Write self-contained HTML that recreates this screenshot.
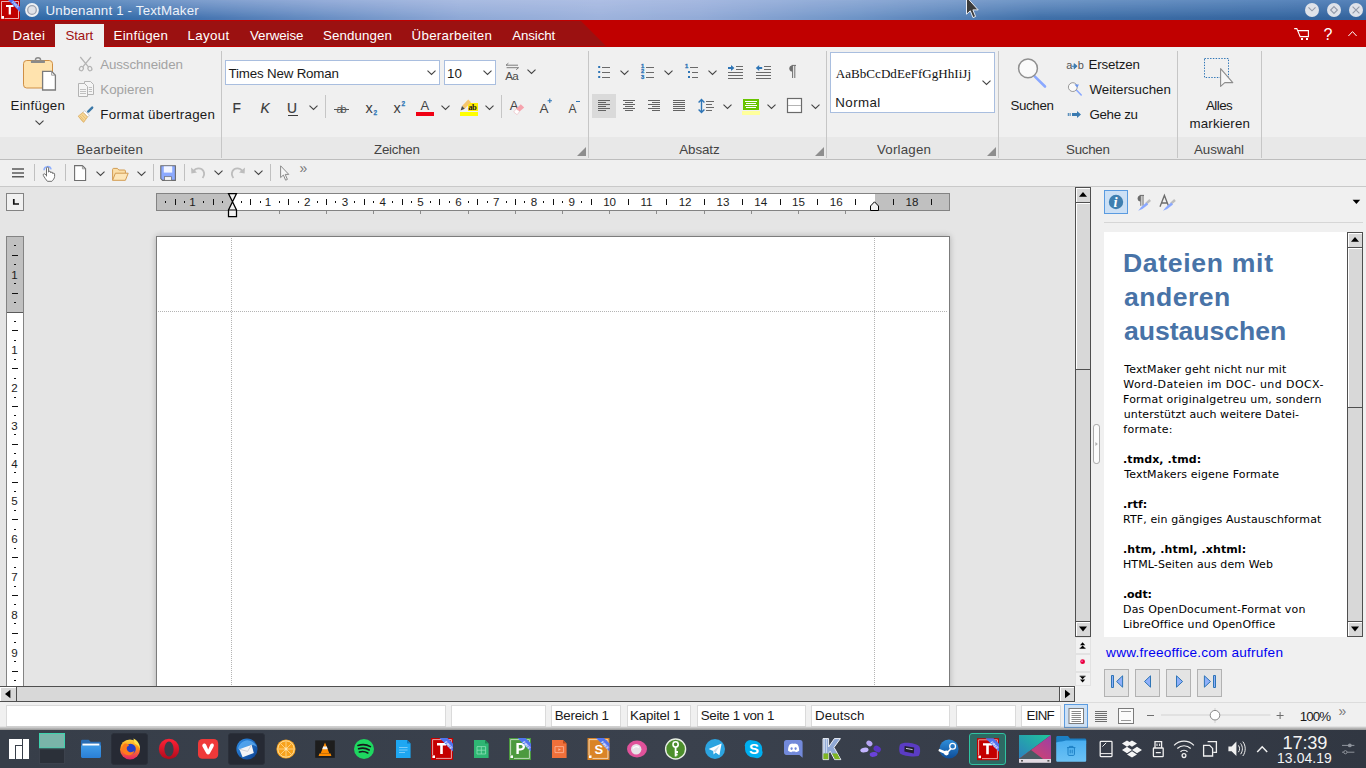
<!DOCTYPE html>
<html lang="de">
<head>
<meta charset="utf-8">
<title>Unbenannt 1 - TextMaker</title>
<style>
*{box-sizing:border-box;margin:0;padding:0}
html,body{width:1366px;height:768px;overflow:hidden;background:#e6e6e6}
body{position:relative;font-family:"Liberation Sans","DejaVu Sans",sans-serif;font-size:13.33px;color:#1e1e1e}
div,span,svg,i,b{position:absolute;display:block}
.sec{left:0;top:0;width:1366px;height:768px}
.t{white-space:nowrap;line-height:1;color:#1a1a1a}
i,b{font-style:normal;font-weight:normal}
svg{overflow:visible}
/* generic helpers */
.vsep{width:1px;background:#c6c6c6;top:51px;height:107px}
.ssep{width:1px;background:#c6c6c6;top:95px;height:23px}
.tsep{width:1px;background:#c0c0c0;top:164px;height:17px}
.chev{width:9px;height:5px}
.fld{background:#fff;border:1px solid #dadada;top:705px;height:22px}
#tbar{left:0;top:0;width:1366px;height:20px;background:linear-gradient(90deg,#2e69a7 0,#316ba8 100px,#4574b0 200px,#6a8fc4 330px,#8ea8d6 460px,#9db2dc 600px,#93abd7 700px,#6d93c6 860px,#3f6fa8 1040px,#34649e 1300px,#33639d 1366px)}
#tbar:after{content:"";position:absolute;left:0;top:0;width:1366px;height:20px;background:linear-gradient(90deg,#5a88bc 0,#6590c2 100px,#7f9fce 200px,#97aed9 330px,#a9bbe1 460px,#adbee3 600px,#a5b8e0 700px,#8eaad5 860px,#7096c6 1040px,#5a86bb 1300px,#5683b9 1366px);-webkit-mask-image:linear-gradient(180deg,#000 0,rgba(0,0,0,.55) 45%,rgba(0,0,0,0) 92%);mask-image:linear-gradient(180deg,#000 0,rgba(0,0,0,.55) 45%,rgba(0,0,0,0) 92%)}
#mbar{left:0;top:20px;width:1366px;height:27px;background:#c00000}
#mdark{left:0;top:21px;width:607px;height:25px;background:#9b1111;clip-path:polygon(0 0,581px 0,606px 25px,0 25px)}
#mtab{left:55px;top:24px;width:49px;height:23px;background:#f0f0f0}
.wb{width:14px;height:14px;top:3px;border-radius:7px;background:#d5dbe6}
#rbg{left:0;top:47px;width:1366px;height:113px;background:#f0f0f0}
#rband{left:0;top:137px;width:1366px;height:22px;background:#e8e8e8}
#rline{left:0;top:159px;width:1366px;height:1px;background:#bdbdbd}
.gl{color:#444}
.cb{background:#fff;border:1px solid #a9bedf}
.dis{color:#a3a3a3}
.corner{width:9px;height:9px;top:147px}
#tbg{left:0;top:160px;width:1366px;height:27px;background:#f0f0f0}
#tline{left:0;top:186px;width:1366px;height:1px;background:#c9c9c9}
#wbg{left:0;top:187px;width:1075px;height:499px;background:#e5e5e5}
#sbg{left:1091px;top:187px;width:275px;height:515px;background:#f0f0f0}
.rn{font-size:11.6px;color:#1c1c1c;line-height:1;white-space:nowrap;text-align:center;width:20px}
#hr{left:156px;top:193px;width:794px;height:18px;background:#fff;border:1px solid #838383}
#vr{left:6px;top:236px;width:18px;height:451px;background:#fff;border:1px solid #838383;border-bottom:none}
.g{background:#c0c0c0}
#page{left:156px;top:236px;width:794px;height:460px;background:#fff;border:1px solid #7c7c7c;border-bottom:none;box-shadow:0 0 6px rgba(0,0,0,.24)}
.sb{background:#d8d8d8;border:1px solid #4f4f4f}
.hl{box-shadow:inset 1px 1px 0 #fff}
.mb{left:1075px;width:16px;background:#f2f2f2;border:1px solid #e2e2e2}
#spanel{left:1104px;top:232px;width:243px;height:405px;background:#fff}
.nb{top:669px;width:25px;height:28px;background:#e4e4e4;border:1px solid #b2b2b2}
.bt{color:#000}
#stbg{left:0;top:702px;width:1366px;height:28px;background:#f0f0f0}
#stsh{left:0;top:726px;width:1366px;height:4px;background:linear-gradient(180deg,rgba(120,120,120,0),rgba(120,120,120,.35) 40%,rgba(90,90,90,.6))}
#tkbg{left:0;top:730px;width:1366px;height:38px;background:linear-gradient(90deg,#373e49 0,#3a414d 50%,#363c48 78%,#313742 100%)}
.tkh{top:733px;height:32px;border-radius:3px;background:#262a34;border:1px solid #2b303a}
</style>
</head>
<body>
<div class="sec" id="titlemenu">
<div id="tbar"></div>
<!-- app icon -->
<svg style="left:0;top:0" width="20" height="20" viewBox="0 0 20 20"><rect width="20" height="20" fill="#c00000"/><path d="M1.5 1.5H18.5V18.5H4.5" fill="none" stroke="#fff" stroke-opacity=".85" stroke-width=".8"/><path d="M1.5 1.5V16" fill="none" stroke="#fff" stroke-opacity=".85" stroke-width=".8"/><rect x="1.2" y="16" width="2.8" height="2.8" fill="#fff"/><path d="M6 5H13.6V7.1H10.9V14.5H8.7V7.1H6Z" fill="#fff"/><path d="M8 0L13.2 0L20 6.8V12Z" fill="#4f6ff2"/><text x="11.6" y="2.6" font-family="Liberation Sans,sans-serif" font-size="3.2" font-weight="700" fill="#dfe6ff" transform="rotate(45 11.6 2.6)">FREE</text></svg>
<!-- keep-above circle -->
<svg style="left:24px;top:2px" width="16" height="16" viewBox="0 0 16 16"><circle cx="8" cy="8" r="6.9" fill="#eef0f3"/><circle cx="8" cy="8" r="4.3" fill="#dfe2e8" stroke="#9da3b0" stroke-width="1.3"/></svg>
<span class="t" style="left:45.50px;top:4.00px;font-size:13.33px;letter-spacing:0.172px;color:#eef2f9;">Unbenannt 1 - TextMaker</span>
<!-- mouse cursor -->
<svg style="left:965px;top:0" width="16" height="21" viewBox="0 0 16 21"><path d="M1.5 -3V14.2L5.3 10.8L8 17.6L10.6 16.5L7.9 9.9H13.2Z" fill="#3c3c3c" stroke="#e8ecf4" stroke-width="1"/></svg>
<!-- window buttons -->
<svg style="left:1304px;top:2px" width="60" height="16" viewBox="1304 2 60 16"><circle cx="1312" cy="10" r="7" fill="#dfe2e9"/><circle cx="1334" cy="10" r="7" fill="#dfe2e9"/><circle cx="1356" cy="10" r="7" fill="#dfe2e9"/><g fill="none" stroke="#9299a8" stroke-width="1.1"><path d="M1308.5 7.4L1312 10.8L1315.5 7.4"/><path d="M1334 6.6L1337.4 10L1334 13.4L1330.6 10Z"/><path d="M1352.6 6.6L1359.4 13.4M1359.4 6.6L1352.6 13.4"/></g></svg>
<!-- menu bar -->
<div id="mbar"></div><div id="mdark"></div><div id="mtab"></div>
<span class="t" style="left:12.50px;top:29.00px;font-size:13.33px;letter-spacing:0.337px;color:#fff;">Datei</span>
<span class="t" style="left:65.50px;top:29.00px;font-size:13.33px;letter-spacing:-0.111px;color:#a01010;">Start</span>
<span class="t" style="left:113.50px;top:29.00px;font-size:13.33px;letter-spacing:0.257px;color:#fff;">Einfügen</span>
<span class="t" style="left:187.50px;top:29.00px;font-size:13.33px;letter-spacing:0.337px;color:#fff;">Layout</span>
<span class="t" style="left:250.00px;top:29.00px;font-size:13.33px;letter-spacing:-0.095px;color:#fff;">Verweise</span>
<span class="t" style="left:323.00px;top:29.00px;font-size:13.33px;letter-spacing:0.090px;color:#fff;">Sendungen</span>
<span class="t" style="left:411.50px;top:29.00px;font-size:13.33px;letter-spacing:0.305px;color:#fff;">Überarbeiten</span>
<span class="t" style="left:512.25px;top:29.00px;font-size:13.33px;letter-spacing:-0.126px;color:#fff;">Ansicht</span>
<!-- cart, help, collapse -->
<svg style="left:1293px;top:27px" width="18" height="14" viewBox="1293 27 18 14"><path d="M1294.2 28.6H1296.8L1300.2 36.6H1308.4V30.6H1298" fill="none" stroke="#fff" stroke-width="1.1"/><path d="M1301 38H1303V40H1301ZM1306 38H1308V40H1306Z" fill="#fff"/></svg>
<span class="t" style="left:1323.60px;top:27.00px;font-size:16px;color:#fff;">?</span>
<svg style="left:1347px;top:30px" width="11" height="7" viewBox="1347 30 11 7" fill="none" stroke="#fff" stroke-width="1"><path d="M1348.4 36L1352.5 31.6L1356.6 36"/></svg>
</div>
<div class="sec" id="ribbon">
<div id="rbg"></div><div id="rband"></div><div id="rline"></div>
<div class="vsep" style="left:221px"></div><div class="vsep" style="left:588px"></div><div class="vsep" style="left:826px"></div><div class="vsep" style="left:998px"></div><div class="vsep" style="left:1177px"></div><div class="vsep" style="left:1261px"></div>
<div class="ssep" style="left:325px"></div><div class="ssep" style="left:501px"></div>

<!-- ===== Bearbeiten ===== -->
<svg style="left:20px;top:54px" width="40" height="40" viewBox="20 54 40 40"><rect x="23.5" y="60.5" width="29" height="27.5" rx="3.2" fill="#ffe3ae" stroke="#cf8f45"/><path d="M35.4 60.3A2.6 2.6 0 0 1 40.6 60.3" fill="none" stroke="#8a8a8a" stroke-width="1.4"/><rect x="30.8" y="60.2" width="14.2" height="2.9" rx="1.2" fill="#8a8a8a"/><path d="M42.6 71.4H51.6L55.4 75.2V90H42.6Z" fill="#fff" stroke="#7b7b7b" stroke-width="1.3"/><path d="M51.6 71.4V75.2H55.4" fill="none" stroke="#9a9a9a" stroke-width=".9"/></svg>
<span class="t" style="left:10.50px;top:99.00px;font-size:13.33px;letter-spacing:0.257px;">Einfügen</span>
<svg class="chev" style="left:35px;top:120.5px" viewBox="0 0 9 5" fill="none" stroke="#444" stroke-width="1.1"><path d="M.5 -.4L4.5 3.4L8.5 -.4"/></svg>
<!-- scissors -->
<svg style="left:78px;top:56px" width="16" height="16" viewBox="78 56 16 16" fill="none" stroke="#b3b3b3" stroke-width="1.2"><path d="M80.3 57L88.6 67.2M91 57L82.6 67.2"/><ellipse cx="81.4" cy="68.6" rx="1.9" ry="2.2" transform="rotate(28 81.4 68.6)"/><ellipse cx="89.9" cy="68.6" rx="1.9" ry="2.2" transform="rotate(-28 89.9 68.6)"/></svg>
<span class="t" style="left:100.20px;top:58.00px;font-size:13.33px;letter-spacing:-0.093px;color:#a3a3a3;">Ausschneiden</span>
<!-- copy -->
<svg style="left:77px;top:80px" width="18" height="18" viewBox="77 80 18 18" fill="#f5f5f5" stroke="#b3b3b3" stroke-width="1"><path d="M84.5 81.5H90.5L93.5 84.5V94.5H84.5Z"/><path d="M78.5 83.5H84.5L87.5 86.5V96.5H78.5Z"/><path d="M80 89.5H86M80 91.5H86M80 93.5H86M88.8 87.5H92M88.8 89.5H92M88.8 91.5H92" stroke-width=".8"/></svg>
<span class="t" style="left:100.30px;top:83.00px;font-size:13.33px;color:#a3a3a3;">Kopieren</span>
<!-- format painter -->
<svg style="left:77px;top:106px" width="18" height="18" viewBox="77 106 18 18"><path d="M92.2 107.6L88.2 111.6" stroke="#3b78a8" stroke-width="2.4" stroke-linecap="round"/><path d="M84.6 110.6L89.4 115.2L87.6 117L83 112.3Z" fill="#fff" stroke="#b9b9b9" stroke-width=".7"/><path d="M83 112.4L87.5 117L83.6 122.4L78.2 116.2Z" fill="#f7d796" stroke="#d9a553" stroke-width=".7"/><path d="M80 115.8L84.2 120.6M81.8 114.6L85.8 119M79.4 117.4L83 121.6" stroke="#dcae62" stroke-width=".6"/></svg>
<span class="t" style="left:100.30px;top:108.00px;font-size:13.33px;letter-spacing:0.265px;">Format übertragen</span>
<span class="t" style="left:76.50px;top:143.00px;font-size:13.33px;letter-spacing:0.216px;color:#444;">Bearbeiten</span>

<!-- ===== Zeichen ===== -->
<div class="cb" style="left:225px;top:60px;width:215px;height:25px"></div>
<span class="t" style="left:228.50px;top:67.00px;font-size:13.33px;letter-spacing:-0.172px;">Times New Roman</span>
<svg class="chev" style="left:427px;top:70.5px" viewBox="0 0 9 5" fill="none" stroke="#444" stroke-width="1.1"><path d="M.5 -.4L4.5 3.4L8.5 -.4"/></svg>
<div class="cb" style="left:444px;top:60px;width:52px;height:25px"></div>
<span class="t" style="left:447.00px;top:67.00px;font-size:13.33px;letter-spacing:0.088px;">10</span>
<svg class="chev" style="left:483px;top:70.5px" viewBox="0 0 9 5" fill="none" stroke="#444" stroke-width="1.1"><path d="M.5 -.4L4.5 3.4L8.5 -.4"/></svg>
<!-- change case -->
<svg style="left:505px;top:62px" width="15" height="8" viewBox="505 62 15 8" fill="none" stroke="#707070" stroke-width=".9"><path d="M506 65.2H518M506 65.2L508.4 63.2M506.6 67.7H518.6M518.6 67.7L516.2 69.7"/></svg>
<span class="t" style="left:505.30px;top:70.00px;font-size:11.6px;letter-spacing:-0.733px;color:#4a4a4a;">Aa</span>
<svg class="chev" style="left:527px;top:69.5px" viewBox="0 0 9 5" fill="none" stroke="#444" stroke-width="1.1"><path d="M.5 -.4L4.5 3.4L8.5 -.4"/></svg>
<span class="t" style="left:232.50px;top:102.00px;font-size:13.8px;color:#3a3a3a;-webkit-text-stroke:.18px #3a3a3a;">F</span>
<span class="t" style="left:260.50px;top:102.00px;font-size:13.8px;font-style:italic;color:#3a3a3a;-webkit-text-stroke:.18px #3a3a3a;">K</span>
<span class="t" style="left:287.00px;top:102.00px;font-size:13.8px;color:#3a3a3a;-webkit-text-stroke:.18px #3a3a3a;">U</span>
<div style="left:288px;top:114.6px;width:9.5px;height:1px;background:#3c3c3c"></div>
<svg class="chev" style="left:309px;top:105.5px" viewBox="0 0 9 5" fill="none" stroke="#444" stroke-width="1.1"><path d="M.5 -.4L4.5 3.4L8.5 -.4"/></svg>
<!-- strike -->
<span class="t" style="left:336.50px;top:104.00px;font-size:11px;letter-spacing:-2.118px;color:#555;">ab</span>
<div style="left:334px;top:109px;width:14.5px;height:1px;background:#555"></div>
<!-- sub / super -->
<span class="t" style="left:365.50px;top:101.00px;font-size:14.5px;color:#3c3c3c;">x</span>
<span class="t" style="left:373.60px;top:110.00px;font-size:6.5px;font-weight:700;color:#2e75b6;-webkit-text-stroke:.25px #2e75b6;">2</span>
<span class="t" style="left:393.50px;top:101.00px;font-size:14.5px;color:#3c3c3c;">x</span>
<span class="t" style="left:401.60px;top:101.00px;font-size:6.5px;font-weight:700;color:#2e75b6;-webkit-text-stroke:.25px #2e75b6;">2</span>
<!-- font colour -->
<span class="t" style="left:420.50px;top:99.00px;font-size:13px;color:#444;">A</span>
<div style="left:416px;top:112px;width:18px;height:4px;background:#f00014"></div>
<svg class="chev" style="left:441px;top:105.5px" viewBox="0 0 9 5" fill="none" stroke="#444" stroke-width="1.1"><path d="M.5 -.4L4.5 3.4L8.5 -.4"/></svg>
<!-- highlight -->
<div style="left:460px;top:112px;width:18px;height:4px;background:#ffff00"></div>
<div style="left:467.5px;top:103px;width:10.5px;height:7.8px;background:#ffee00"></div>
<span class="t" style="left:468.30px;top:103.00px;font-size:8.5px;letter-spacing:-0.550px;font-family:'Liberation Serif',serif;font-weight:700;color:#222;">ab</span>
<svg style="left:460px;top:99px" width="12" height="12" viewBox="460 99 12 12"><path d="M468.2 99.4L471 102.2L464.8 108.8L462 106Z" fill="#f5c66e"/><path d="M462 106L464.8 108.8L460.6 110.4Z" fill="#4a4a4a"/></svg>
<svg class="chev" style="left:485px;top:105.5px" viewBox="0 0 9 5" fill="none" stroke="#444" stroke-width="1.1"><path d="M.5 -.4L4.5 3.4L8.5 -.4"/></svg>
<!-- clear formatting -->
<span class="t" style="left:509.80px;top:99.00px;font-size:13px;color:#444;">A</span>
<svg style="left:512px;top:102px" width="14" height="14" viewBox="512 102 14 14"><path d="M520.8 104.2L524.2 107.4L519.6 111.5L516.2 108.8Z" fill="#f6a3ad"/><path d="M516.2 108.8L519.6 111.5L517.1 114.7L513.7 112Z" fill="#fff" stroke="#eab6bb" stroke-width=".6"/></svg>
<span class="t" style="left:539.60px;top:102.00px;font-size:13.5px;color:#444;">A</span>
<svg style="left:547px;top:98px" width="6" height="6" viewBox="0 0 6 6" stroke="#2e75b6" stroke-width="1.1"><path d="M2.8 .6V5M.6 2.8H5"/></svg>
<span class="t" style="left:568.40px;top:103.00px;font-size:12px;color:#444;">A</span>
<div style="left:575.6px;top:101px;width:4.4px;height:1.1px;background:#2e75b6"></div>
<span class="t" style="left:374.00px;top:143.00px;font-size:13.33px;letter-spacing:-0.251px;color:#444;">Zeichen</span>
<svg class="corner" style="left:577px" viewBox="0 0 9 9"><path d="M9 0V9H0Z" fill="#8e8e8e"/></svg>

<!-- ===== Absatz ===== -->
<!-- bullets -->
<svg style="left:597px;top:63px" width="16" height="18" viewBox="597 63 16 18"><path d="M598.2 66H600.2V68H598.2ZM598.2 71H600.2V73H598.2ZM598.2 76H600.2V78H598.2Z" fill="#2e75b6"/><path d="M602 67.5H610M602 72.5H610M602 77.5H610" stroke="#6a6a6a" stroke-width="1"/></svg>
<svg class="chev" style="left:619.5px;top:70.5px" viewBox="0 0 9 5" fill="none" stroke="#444" stroke-width="1.1"><path d="M.5 -.4L4.5 3.4L8.5 -.4"/></svg>
<!-- numbered -->
<span class="t" style="left:641.00px;top:64.00px;font-size:5.8px;font-weight:700;color:#2e75b6;-webkit-text-stroke:.35px #2e75b6;">1</span>
<span class="t" style="left:641.00px;top:69.00px;font-size:5.8px;font-weight:700;color:#2e75b6;-webkit-text-stroke:.35px #2e75b6;">2</span>
<span class="t" style="left:641.00px;top:75.00px;font-size:5.8px;font-weight:700;color:#2e75b6;-webkit-text-stroke:.35px #2e75b6;">3</span>
<svg style="left:645px;top:63px" width="10" height="18" viewBox="645 63 10 18"><path d="M646 67.5H654M646 72.5H654M646 77.5H654" stroke="#6a6a6a" stroke-width="1"/></svg>
<svg class="chev" style="left:663.5px;top:70.5px" viewBox="0 0 9 5" fill="none" stroke="#444" stroke-width="1.1"><path d="M.5 -.4L4.5 3.4L8.5 -.4"/></svg>
<!-- multilevel -->
<span class="t" style="left:685.00px;top:64.00px;font-size:5.8px;font-weight:700;color:#2e75b6;-webkit-text-stroke:.35px #2e75b6;">1</span>
<svg style="left:684px;top:63px" width="16" height="18" viewBox="684 63 16 18"><path d="M688 71H690V73H688ZM688 76H690V78H688Z" fill="#2e75b6"/><path d="M690 67.5H698M692 72.5H698M692 77.5H698" stroke="#6a6a6a" stroke-width="1"/></svg>
<svg class="chev" style="left:707.5px;top:70.5px" viewBox="0 0 9 5" fill="none" stroke="#444" stroke-width="1.1"><path d="M.5 -.4L4.5 3.4L8.5 -.4"/></svg>
<!-- indent more / less -->
<svg style="left:727px;top:63px" width="18" height="18" viewBox="727 63 18 18"><path d="M736 66.5H743M736 69.5H743M728 72.5H743M728 75.5H743M728 78.5H743" stroke="#6a6a6a" stroke-width="1"/><path d="M728 67H731V65L734.4 68L731 71V69H728Z" fill="#2e75b6"/></svg>
<svg style="left:755px;top:63px" width="18" height="18" viewBox="755 63 18 18"><path d="M764 66.5H771M764 69.5H771M756 72.5H771M756 75.5H771M756 78.5H771" stroke="#6a6a6a" stroke-width="1"/><path d="M762.2 67H759.2V65L755.8 68L759.2 71V69H762.2Z" fill="#2e75b6"/></svg>
<!-- pilcrow -->
<svg style="left:787px;top:64px" width="10" height="15" viewBox="787 64 10 15"><path d="M792.4 65.4A3 3 0 0 0 792.4 71.6Z" fill="#6e6e6e"/><path d="M792.6 65.4V78M794.8 65.4V78M791.6 65.4H796" stroke="#6e6e6e" stroke-width="1" fill="none"/></svg>
<!-- alignment -->
<div style="left:592px;top:94px;width:24px;height:24px;background:#dadada"></div>
<svg style="left:597px;top:98px" width="90" height="14" viewBox="597 98 90 14" stroke="#636363" stroke-width="1"><path d="M598 100.5H610M598 102.5H606M598 104.5H610M598 106.5H606M598 108.5H610M598 110.5H606"/><path d="M623 100.5H635M625 102.5H633M623 104.5H635M625 106.5H633M623 108.5H635M625 110.5H633"/><path d="M648 100.5H660M652 102.5H660M648 104.5H660M652 106.5H660M648 108.5H660M652 110.5H660"/><path d="M673 100.5H685M673 102.5H685M673 104.5H685M673 106.5H685M673 108.5H685M673 110.5H685"/></svg>
<!-- line spacing -->
<svg style="left:697px;top:97px" width="19" height="18" viewBox="697 97 19 18" fill="none"><path d="M701.5 100V112M698.6 102.4L701.5 99.4L704.4 102.4M698.6 109.6L701.5 112.6L704.4 109.6" stroke="#2e75b6" stroke-width="1.4"/><path d="M706 101.5H714M706 104.5H712M706 107.5H714M706 110.5H712" stroke="#6a6a6a" stroke-width="1"/></svg>
<svg class="chev" style="left:722.5px;top:104.5px" viewBox="0 0 9 5" fill="none" stroke="#444" stroke-width="1.1"><path d="M.5 -.4L4.5 3.4L8.5 -.4"/></svg>
<!-- shading -->
<div style="left:743px;top:99px;width:16px;height:11px;background:#68c400"></div>
<svg style="left:743px;top:99px" width="16" height="12" viewBox="743 99 16 12"><path d="M745 101.5H757M746 103.5H756M745 105.5H757M746 107.5H756" stroke="#fff" stroke-width="1"/></svg>
<div style="left:742px;top:111px;width:18px;height:4px;background:#ffff9c"></div>
<svg class="chev" style="left:766.5px;top:104.5px" viewBox="0 0 9 5" fill="none" stroke="#444" stroke-width="1.1"><path d="M.5 -.4L4.5 3.4L8.5 -.4"/></svg>
<!-- borders -->
<svg style="left:786px;top:97px" width="17" height="17" viewBox="786 97 17 17"><rect x="787.5" y="98.5" width="14" height="14" fill="#fff" stroke="#6a6a6a" stroke-width="1.2"/><path d="M788 105.5H801" stroke="#b4b4b4" stroke-width="1"/></svg>
<svg class="chev" style="left:810.5px;top:104.5px" viewBox="0 0 9 5" fill="none" stroke="#444" stroke-width="1.1"><path d="M.5 -.4L4.5 3.4L8.5 -.4"/></svg>
<span class="t" style="left:679.30px;top:143.00px;font-size:13.33px;letter-spacing:-0.076px;color:#444;">Absatz</span>
<svg class="corner" style="left:815px" viewBox="0 0 9 9"><path d="M9 0V9H0Z" fill="#8e8e8e"/></svg>

<!-- ===== Vorlagen ===== -->
<div class="cb" style="left:830px;top:52px;width:165px;height:61px"></div>
<span class="t" style="left:835.80px;top:67.00px;font-size:13.1px;font-family:'Liberation Serif',serif;color:#111;">AaBbCcDdEeFfGgHhIiJj</span>
<span class="t" style="left:835.30px;top:96.00px;font-size:13.33px;letter-spacing:0.402px;">Normal</span>
<svg class="chev" style="left:981.5px;top:80.5px" viewBox="0 0 9 5" fill="none" stroke="#444" stroke-width="1.1"><path d="M.5 -.4L4.5 3.4L8.5 -.4"/></svg>
<span class="t" style="left:877.00px;top:143.00px;font-size:13.33px;letter-spacing:0.185px;color:#444;">Vorlagen</span>
<svg class="corner" style="left:987px" viewBox="0 0 9 9"><path d="M9 0V9H0Z" fill="#8e8e8e"/></svg>

<!-- ===== Suchen ===== -->
<svg style="left:1016px;top:56px" width="32" height="33" viewBox="1016 56 32 33"><path d="M1034.7 76.4L1045 86.5" stroke="#8aa8ff" stroke-width="2.6" stroke-linecap="round"/><circle cx="1028" cy="68.4" r="9.4" fill="#fafafa" stroke="#8f8f8f" stroke-width="1.5"/></svg>
<span class="t" style="left:1010.40px;top:99.00px;font-size:13.33px;letter-spacing:-0.338px;">Suchen</span>
<span class="t" style="left:1066.20px;top:60.00px;font-size:11px;color:#555;">a</span>
<span class="t" style="left:1077.80px;top:60.00px;font-size:11px;color:#555;">b</span>
<svg style="left:1071px;top:62.6px" width="7" height="7" viewBox="1071 62 7 7"><path d="M1071.8 65.2H1074.6M1074.2 62.8L1076.8 65.2L1074.2 67.6Z" stroke="#3a7ab0" stroke-width="1.1" fill="#3a7ab0" stroke-linejoin="round"/></svg>
<span class="t" style="left:1088.50px;top:58.00px;font-size:13.33px;letter-spacing:-0.169px;">Ersetzen</span>
<svg style="left:1066px;top:81px" width="17" height="16" viewBox="1066 81 17 16"><path d="M1076.4 90L1081.2 95" stroke="#8aa8ff" stroke-width="1.6" stroke-linecap="round"/><circle cx="1072.8" cy="87.1" r="4.4" fill="#fafafa" stroke="#8d8d8d" stroke-width=".9"/><path d="M1074.4 84.6H1079L1077.2 87.6Z" fill="#6a95f0"/></svg>
<span class="t" style="left:1089.50px;top:83.00px;font-size:13.33px;letter-spacing:0.015px;">Weitersuchen</span>
<svg style="left:1067px;top:110px" width="15" height="9" viewBox="1067 110 15 9"><path d="M1068.3 113V116M1070.1 113V116" stroke="#3a7ab0" stroke-width="1"/><path d="M1072 113H1077V111L1081 114.5L1077 118V116H1072Z" fill="#3a7ab0"/></svg>
<span class="t" style="left:1089.50px;top:108.00px;font-size:13.33px;letter-spacing:-0.329px;">Gehe zu</span>
<span class="t" style="left:1066.00px;top:143.00px;font-size:13.33px;letter-spacing:-0.258px;color:#444;">Suchen</span>

<!-- ===== Auswahl ===== -->
<svg style="left:1203px;top:57px" width="33" height="32" viewBox="1203 57 33 32"><rect x="1204.5" y="58.5" width="24" height="19" fill="none" stroke="#2e75b6" stroke-width="1" stroke-dasharray="1.4 1.4"/><path d="M1220.6 68.6V86.4L1224.8 82.6H1232.8Z" fill="#f6f6f6" stroke="#8c8c8c" stroke-width="1.1" stroke-linejoin="round"/></svg>
<span class="t" style="left:1206.00px;top:99.00px;font-size:13.33px;letter-spacing:-0.556px;">Alles</span>
<span class="t" style="left:1189.50px;top:117.00px;font-size:13.33px;letter-spacing:0.145px;">markieren</span>
<span class="t" style="left:1194.00px;top:143.00px;font-size:13.33px;letter-spacing:-0.069px;color:#444;">Auswahl</span>
</div>
<div class="sec" id="toolbar">
<div id="tbg"></div><div id="tline"></div>
<div class="tsep" style="left:34px"></div><div class="tsep" style="left:65px"></div><div class="tsep" style="left:153px"></div><div class="tsep" style="left:184px"></div><div class="tsep" style="left:270px"></div>
<!-- hamburger -->
<svg style="left:11px;top:166px" width="14" height="14" viewBox="11 166 14 14"><path d="M12 169.1H24M12 173H24M12 176.8H24" stroke="#5a5a5a" stroke-width="1.5"/></svg>
<!-- touch hand -->
<svg style="left:42px;top:163px" width="14" height="20" viewBox="42 163 14 20" fill="none"><path d="M44 170.2A3.6 3.6 0 0 1 51.1 169.4" stroke="#8fb0ff" stroke-width="1.5"/><path d="M46.5 176.2V168.1C46.5 166.8 48.6 166.8 48.6 168.1V172.2C48.9 170.9 50.6 171 50.7 172.2V173C51 171.8 52.7 171.9 52.8 173V173.8C53.1 172.8 54.6 172.9 54.6 174.1V176.5C54.6 178.4 53 180 51.9 181.3H47.4C46 179.6 44.5 177.6 43.4 175.6C42.8 174.5 43.8 173.3 44.9 174L46.5 175.6Z" fill="#fff" stroke="#6e6e6e" stroke-width="1" stroke-linejoin="round"/></svg>
<!-- new -->
<svg style="left:73px;top:164px" width="15" height="18" viewBox="73 164 15 18"><path d="M74.6 165.6H82.4L85.6 168.8V180.5H74.6Z" fill="#fff" stroke="#6e6e6e" stroke-width="1.1"/><path d="M82.4 165.6V168.8H85.6" fill="none" stroke="#8e8e8e" stroke-width=".9"/></svg>
<svg class="chev" style="left:95.5px;top:171.5px" viewBox="0 0 9 5" fill="none" stroke="#444" stroke-width="1.1"><path d="M.5 -.4L4.5 3.4L8.5 -.4"/></svg>
<!-- open -->
<svg style="left:111px;top:167px" width="19" height="15" viewBox="111 167 19 15"><path d="M112.6 180.2V169.4C112.6 168.8 113 168.4 113.6 168.4H117.4L118.8 170H124.4C125 170 125.4 170.4 125.4 171V173" fill="#fbdfa8" stroke="#d29c52" stroke-width="1"/><path d="M112.6 180.3L115.4 173.2H128.2L125.4 180.3Z" fill="#fde6b8" stroke="#d29c52" stroke-width="1" stroke-linejoin="round"/></svg>
<svg class="chev" style="left:136.5px;top:171.5px" viewBox="0 0 9 5" fill="none" stroke="#444" stroke-width="1.1"><path d="M.5 -.4L4.5 3.4L8.5 -.4"/></svg>
<!-- save -->
<svg style="left:159px;top:164px" width="18" height="18" viewBox="159 164 18 18"><path d="M160.8 165.8H175.4V180.4H162.6L160.8 178.6Z" fill="#8caaff" stroke="#6b6b6b" stroke-width="1.1"/><rect x="163.8" y="166.3" width="8.4" height="6.3" fill="#f2f5ff"/><rect x="164.6" y="176.7" width="6.8" height="3.6" fill="#f4f4f4" stroke="#6b6b6b" stroke-width=".7"/></svg>
<!-- undo / redo -->
<svg style="left:190px;top:166px" width="16" height="14" viewBox="190 166 16 14" fill="none"><path d="M193.6 171.2C196 167.6 201.4 167.6 203.4 171C204.6 173.2 204 176 202.6 178" stroke="#bdbdbd" stroke-width="1.8"/><path d="M191 167.6L191.4 173.6L197 172.4Z" fill="#bdbdbd"/></svg>
<svg class="chev" style="left:213.5px;top:170.5px" viewBox="0 0 9 5" fill="none" stroke="#444" stroke-width="1.1"><path d="M.5 -.4L4.5 3.4L8.5 -.4"/></svg>
<svg style="left:230px;top:166px" width="16" height="14" viewBox="230 166 16 14" fill="none"><path d="M242.4 171.2C240 167.6 234.6 167.6 232.6 171C231.4 173.2 232 176 233.4 178" stroke="#bdbdbd" stroke-width="1.8"/><path d="M245 167.6L244.6 173.6L239 172.4Z" fill="#bdbdbd"/></svg>
<svg class="chev" style="left:253.5px;top:170.5px" viewBox="0 0 9 5" fill="none" stroke="#444" stroke-width="1.1"><path d="M.5 -.4L4.5 3.4L8.5 -.4"/></svg>
<!-- pointer -->
<svg style="left:279px;top:164px" width="12" height="18" viewBox="279 164 12 18"><path d="M280.6 165.8V177.6L283.4 175L285.6 180.2L287.4 179.4L285.2 174.4H288.8Z" fill="#f6f6f6" stroke="#8a8a8a" stroke-width="1" stroke-linejoin="round"/></svg>
<span class="t" style="left:299.60px;top:161.00px;font-size:14px;color:#777;">»</span>
</div>
<div class="sec" id="workspace">
<div id="wbg"></div><div id="sbg"></div>
<!-- tab selector -->
<div style="left:6px;top:193px;width:18px;height:18px;background:#f1f1f1;border:1px solid #838383"></div>
<svg style="left:12px;top:198px" width="8" height="8" viewBox="0 0 8 8"><path d="M1.8 1V6H7" fill="none" stroke="#111" stroke-width="1.7"/></svg>
<!-- horizontal ruler -->
<div id="hr"></div>
<div class="g" style="left:157px;top:194px;width:75px;height:16px"></div>
<div class="g" style="left:875px;top:194px;width:74px;height:16px"></div>
<svg style="left:0;top:187px" width="1075" height="30" viewBox="0 187 1075 30"><path d="M175.5 199V205M213.5 199V205M250.5 199V205M288.5 199V205M326.5 199V205M364.5 199V205M402.5 199V205M439.5 199V205M477.5 199V205M515.5 199V205M553.5 199V205M591.5 199V205M628.5 199V205M666.5 199V205M704.5 199V205M742.5 199V205M780.5 199V205M817.5 199V205M855.5 199V205M893.5 199V205M931.5 199V205" stroke="#111" stroke-width="1"/><path d="M165.5 201V203M184.5 201V203M203.5 201V203M222.5 201V203M241.5 201V203M260.5 201V203M279.5 201V203M298.5 201V203M317.5 201V203M335.5 201V203M354.5 201V203M373.5 201V203M392.5 201V203M411.5 201V203M430.5 201V203M449.5 201V203M468.5 201V203M487.5 201V203M506.5 201V203M524.5 201V203M543.5 201V203M562.5 201V203M581.5 201V203" stroke="#111" stroke-width="1"/>
<path d="M279.5 211V214M326.5 211V214M373.5 211V214M420.5 211V214M468.5 211V214M515.5 211V214M562.5 211V214M609.5 211V214M656.5 211V214M704.5 211V214M751.5 211V214M798.5 211V214M845.5 211V214" stroke="#8c8c8c" stroke-width="1"/>
<path d="M228.5 193.5H236.5L232.5 201.7L236.5 210V216.5H228.5V210L232.5 201.7Z" fill="#f2f2f2" stroke="#000" stroke-width="1.25" stroke-linejoin="miter"/><path d="M228.5 210H236.5" stroke="#000" stroke-width="1"/>
<path d="M870.5 210.5V206L874.5 201.8L878.5 206V210.5Z" fill="#f2f2f2" stroke="#000" stroke-width="1"/></svg>
<span class="rn" style="left:182.5px;top:196.4px">1</span>
<span class="rn" style="left:258.1px;top:196.4px">1</span>
<span class="rn" style="left:297.2px;top:196.4px">2</span>
<span class="rn" style="left:335.0px;top:196.4px">3</span>
<span class="rn" style="left:372.8px;top:196.4px">4</span>
<span class="rn" style="left:410.6px;top:196.4px">5</span>
<span class="rn" style="left:448.4px;top:196.4px">6</span>
<span class="rn" style="left:486.2px;top:196.4px">7</span>
<span class="rn" style="left:524.0px;top:196.4px">8</span>
<span class="rn" style="left:561.8px;top:196.4px">9</span>
<span class="rn" style="left:599.6px;top:196.4px">10</span>
<span class="rn" style="left:636.5px;top:196.4px">11</span>
<span class="rn" style="left:675.1px;top:196.4px">12</span>
<span class="rn" style="left:712.9px;top:196.4px">13</span>
<span class="rn" style="left:750.7px;top:196.4px">14</span>
<span class="rn" style="left:788.5px;top:196.4px">15</span>
<span class="rn" style="left:826.3px;top:196.4px">16</span>
<span class="rn" style="left:901.9px;top:196.4px">18</span>
<div id="vr"></div><div class="g" style="left:7px;top:237px;width:16px;height:75px"></div><div style="left:7px;top:312px;width:16px;height:1px;background:#5a5a5a"></div>
<svg style="left:0;top:230px" width="30" height="456" viewBox="0 230 30 456"><path d="M12 255.5H18M12 293.5H18M12 330.5H18M12 368.5H18M12 406.5H18M12 444.5H18M12 482.5H18M12 519.5H18M12 557.5H18M12 595.5H18M12 633.5H18M12 671.5H18" stroke="#111" stroke-width="1"/><path d="M14 245.5H16M14 264.5H16M14 283.5H16M14 302.5H16M14 321.5H16M14 340.5H16M14 359.5H16M14 378.5H16M14 397.5H16M14 415.5H16M14 434.5H16M14 453.5H16M14 472.5H16M14 491.5H16M14 510.5H16M14 529.5H16M14 548.5H16M14 567.5H16M14 586.5H16M14 604.5H16M14 623.5H16M14 642.5H16M14 661.5H16M14 680.5H16" stroke="#111" stroke-width="1"/></svg>
<span class="rn" style="left:4.6px;top:268.5px">1</span>
<span class="rn" style="left:4.6px;top:344.1px">1</span>
<span class="rn" style="left:4.6px;top:381.9px">2</span>
<span class="rn" style="left:4.6px;top:419.7px">3</span>
<span class="rn" style="left:4.6px;top:457.5px">4</span>
<span class="rn" style="left:4.6px;top:495.3px">5</span>
<span class="rn" style="left:4.6px;top:533.1px">6</span>
<span class="rn" style="left:4.6px;top:570.9px">7</span>
<span class="rn" style="left:4.6px;top:608.7px">8</span>
<span class="rn" style="left:4.6px;top:646.5px">9</span>
<div id="page"></div>
<svg style="left:156px;top:236px" width="794" height="450" viewBox="156 236 794 450"><path d="M231.5 238V686M874.5 238V686M158 311.5H948" stroke="#b4b4b4" stroke-width="1" stroke-dasharray="1 1" fill="none"/></svg>
<!-- vertical scrollbar -->
<div class="sb" style="left:1075px;top:187px;width:16px;height:450px"></div>
<div class="sb hl" style="left:1075px;top:187px;width:16px;height:16px"></div>
<div class="sb hl" style="left:1075px;top:202px;width:16px;height:168px"></div>
<div class="sb hl" style="left:1075px;top:621px;width:16px;height:16px"></div>
<svg style="left:1075px;top:187px" width="16" height="450" viewBox="0 0 16 450"><path d="M4 9.8L8 5L12 9.8Z" fill="#000"/><path d="M4 439.6L8 444.4L12 439.6Z" fill="#000"/></svg>
<!-- page nav mini buttons -->
<div style="left:1075px;top:637px;width:16px;height:65px;background:#f0f0f0"></div>
<div class="mb" style="top:637px;height:17px"></div><div class="mb" style="top:654px;height:18px"></div><div class="mb" style="top:672px;height:14px"></div>
<svg style="left:1075px;top:637px" width="16" height="50" viewBox="1075 637 16 50"><path d="M1080 645.2L1082.6 642.2L1085.2 645.2ZM1080 648.2L1082.6 645.4L1085.2 648.2Z" fill="#000"/><path d="M1079.6 648.3H1085.6" stroke="#000" stroke-width=".8"/><circle cx="1082.6" cy="661.7" r="2.4" fill="#e8003a"/><circle cx="1082" cy="661.2" r=".9" fill="#ff4fae"/><path d="M1080 676.4L1082.6 679.2L1085.2 676.4ZM1080 679.4L1082.6 682.4L1085.2 679.4Z" fill="#000"/><path d="M1079.6 676.2H1085.6" stroke="#000" stroke-width=".8"/></svg>
<!-- horizontal scrollbar -->
<div class="sb" style="left:-1px;top:686px;width:1076px;height:16px"></div>
<div class="sb hl" style="left:-1px;top:686px;width:18px;height:16px"></div>
<div class="sb hl" style="left:1059px;top:686px;width:16px;height:16px"></div>
<svg style="left:0;top:686px" width="1075" height="16" viewBox="0 0 1075 16"><path d="M10.4 3.8L5 8L10.4 12.2Z" fill="#000"/><path d="M1065 3.8L1070.4 8L1065 12.2Z" fill="#000"/></svg>
<!-- splitter handle -->
<svg style="left:1092px;top:423px" width="9" height="42" viewBox="1092 423 9 42"><rect x="1093.5" y="424.5" width="6" height="39" rx="2.6" fill="#fbfbfb" stroke="#a9a9a9" stroke-width="1"/><path d="M1095.4 442L1097.8 444L1095.4 446Z" fill="#b0b0b0"/></svg>
</div>
<div class="sec" id="sidebar">
<!-- top icons -->
<div style="left:1104px;top:190px;width:24px;height:24px;background:#cce0f5;border:1px solid #5a9be0"></div>
<svg style="left:1108px;top:194px" width="16" height="16" viewBox="0 0 16 16"><circle cx="8" cy="8" r="7.2" fill="#3f7fb0"/></svg>
<span class="t" style="left:1113.60px;top:195.00px;font-size:14.5px;font-family:'Liberation Serif',serif;font-weight:700;font-style:italic;color:#fff;">i</span>
<svg style="left:1134px;top:193px" width="44" height="19" viewBox="1134 193 44 19"><path d="M1140.6 195.4A3 3 0 0 0 1140.6 201.4Z" fill="#6c6c6c"/><path d="M1140.8 195.4V205.8M1143 195.4V205.8M1139.6 195.4H1144" stroke="#6c6c6c" stroke-width="1" fill="none"/><path d="M1150.2 200L1146.2 203.6" stroke="#bdbdbd" stroke-width="2.4"/><path d="M1146.4 202.4L1148.2 204.6L1142.4 209L1138.2 210.8L1141.2 207Z" fill="#8aa8ff"/>
<path d="M1160 206.8L1164.4 195.4L1168.8 206.8M1161.8 203H1167" fill="none" stroke="#6c6c6c" stroke-width="1.3"/><path d="M1175 200L1171 203.6" stroke="#bdbdbd" stroke-width="2.4"/><path d="M1171.2 202.4L1173 204.6L1167.2 209L1163 210.8L1166 207Z" fill="#8aa8ff"/></svg>
<svg style="left:1352px;top:199px" width="9" height="6" viewBox="0 0 9 6"><path d="M.6 .8H8.2L4.4 5Z" fill="#000"/></svg>
<div style="left:1104px;top:222px;width:259px;height:1px;background:#d6d6d6"></div>
<!-- content -->
<div id="spanel"></div>
<span class="t" style="left:1122.90px;top:250.00px;font-size:26.6px;letter-spacing:0.681px;font-weight:700;color:#4873a7;">Dateien mit</span>
<span class="t" style="left:1123.90px;top:284.00px;font-size:26.6px;letter-spacing:0.499px;font-weight:700;color:#4873a7;">anderen</span>
<span class="t" style="left:1123.90px;top:318.00px;font-size:26.6px;letter-spacing:-0.023px;font-weight:700;color:#4873a7;">austauschen</span>
<span class="t" style="left:1124.30px;top:364.00px;font-size:11px;letter-spacing:0.124px;font-family:'DejaVu Sans',sans-serif;color:#000;">TextMaker geht nicht nur mit</span>
<span class="t" style="left:1123.30px;top:379.00px;font-size:11px;letter-spacing:0.397px;font-family:'DejaVu Sans',sans-serif;color:#000;">Word-Dateien im DOC- und DOCX-</span>
<span class="t" style="left:1123.00px;top:394.00px;font-size:11px;letter-spacing:0.195px;font-family:'DejaVu Sans',sans-serif;color:#000;">Format originalgetreu um, sondern</span>
<span class="t" style="left:1123.80px;top:409.00px;font-size:11px;letter-spacing:0.094px;font-family:'DejaVu Sans',sans-serif;color:#000;">unterstützt auch weitere Datei-</span>
<span class="t" style="left:1123.30px;top:424.00px;font-size:11px;letter-spacing:0.290px;font-family:'DejaVu Sans',sans-serif;color:#000;">formate:</span>
<span class="t" style="left:1123.00px;top:454.00px;font-size:11px;letter-spacing:0.096px;font-family:'DejaVu Sans',sans-serif;font-weight:700;color:#000;">.tmdx, .tmd:</span>
<span class="t" style="left:1124.30px;top:469.00px;font-size:11px;letter-spacing:0.144px;font-family:'DejaVu Sans',sans-serif;color:#000;">TextMakers eigene Formate</span>
<span class="t" style="left:1123.00px;top:499.00px;font-size:11px;letter-spacing:0.013px;font-family:'DejaVu Sans',sans-serif;font-weight:700;color:#000;">.rtf:</span>
<span class="t" style="left:1123.00px;top:514.00px;font-size:11px;letter-spacing:0.116px;font-family:'DejaVu Sans',sans-serif;color:#000;">RTF, ein gängiges Austauschformat</span>
<span class="t" style="left:1123.00px;top:544.00px;font-size:11px;letter-spacing:0.098px;font-family:'DejaVu Sans',sans-serif;font-weight:700;color:#000;">.htm, .html, .xhtml:</span>
<span class="t" style="left:1123.00px;top:559.00px;font-size:11px;letter-spacing:0.103px;font-family:'DejaVu Sans',sans-serif;color:#000;">HTML-Seiten aus dem Web</span>
<span class="t" style="left:1123.00px;top:589.00px;font-size:11px;letter-spacing:-0.067px;font-family:'DejaVu Sans',sans-serif;font-weight:700;color:#000;">.odt:</span>
<span class="t" style="left:1123.00px;top:604.00px;font-size:11px;letter-spacing:0.201px;font-family:'DejaVu Sans',sans-serif;color:#000;">Das OpenDocument-Format von</span>
<span class="t" style="left:1123.00px;top:619.00px;font-size:11px;letter-spacing:0.133px;font-family:'DejaVu Sans',sans-serif;color:#000;">LibreOffice und OpenOffice</span>
<!-- inner scrollbar -->
<div class="sb" style="left:1347px;top:232px;width:16px;height:405px"></div>
<div class="sb hl" style="left:1347px;top:232px;width:16px;height:16px"></div>
<div class="sb hl" style="left:1347px;top:247px;width:16px;height:161px"></div>
<div class="sb hl" style="left:1347px;top:621px;width:16px;height:16px"></div>
<svg style="left:1347px;top:232px" width="16" height="405" viewBox="0 0 16 405"><path d="M4 9.8L8 5L12 9.8Z" fill="#000"/><path d="M4 394.6L8 399.4L12 394.6Z" fill="#000"/></svg>
<!-- link + nav -->
<span class="t" style="left:1106.10px;top:646.00px;font-size:13.6px;letter-spacing:0.215px;color:#0000f0;">www.freeoffice.com aufrufen</span>
<div class="nb" style="left:1104px"></div><div class="nb" style="left:1135px"></div><div class="nb" style="left:1166px"></div><div class="nb" style="left:1197px"></div>
<svg style="left:1104px;top:669px" width="120" height="28" viewBox="1104 669 120 28" fill="#8fb0fa" stroke="#2e75b6" stroke-width="1" stroke-linejoin="miter"><path d="M1111.5 675.5H1113.5V687.5H1111.5ZM1116.6 681.5L1122.6 675.8V687.2Z"/><path d="M1144.5 681.5L1150.5 675.8V687.2Z"/><path d="M1182.6 681.5L1176.5 675.8V687.2Z"/><path d="M1210.5 681.5L1204.4 675.8V687.2ZM1213.5 675.5H1215.5V687.5H1213.5Z"/></svg>
</div>
<div class="sec" id="status">
<div id="stbg"></div>
<div style="left:1075px;top:702px;width:291px;height:1px;background:#dcdcdc"></div>
<div class="fld" style="left:6px;width:440px"></div>
<div class="fld" style="left:451px;width:95px"></div>
<div class="fld" style="left:551px;width:70px"></div>
<div class="fld" style="left:627px;width:64px"></div>
<div class="fld" style="left:697px;width:109px"></div>
<div class="fld" style="left:811px;width:139px"></div>
<div class="fld" style="left:956px;width:60px"></div>
<div class="fld" style="left:1021px;width:40px"></div>
<span class="t" style="left:554.70px;top:709.00px;font-size:13.33px;letter-spacing:-0.249px;">Bereich 1</span>
<span class="t" style="left:630.00px;top:709.00px;font-size:13.33px;letter-spacing:-0.182px;">Kapitel 1</span>
<span class="t" style="left:700.80px;top:709.00px;font-size:13.33px;letter-spacing:-0.349px;">Seite 1 von 1</span>
<span class="t" style="left:815.00px;top:709.00px;font-size:13.33px;letter-spacing:0.086px;">Deutsch</span>
<span class="t" style="left:1026.60px;top:709.00px;font-size:13.33px;letter-spacing:-0.739px;">EINF</span>
<!-- view buttons -->
<div style="left:1064px;top:704px;width:24px;height:24px;background:#cce0f5;border:1px solid #5a9be0"></div>
<svg style="left:1064px;top:704px" width="75" height="24" viewBox="1064 704 75 24"><rect x="1069" y="708.5" width="14.5" height="15" fill="#fff" stroke="#7a7a7a" stroke-width="1"/><path d="M1071.5 711.5H1081M1071.5 713.5H1081M1071.5 715.5H1081M1071.5 717.5H1081M1071.5 719.5H1081M1071.5 721.5H1081" stroke="#8a8a8a" stroke-width="1"/><path d="M1095 711.5H1107M1095 713.5H1107M1095 715.5H1107M1095 717.5H1107M1095 719.5H1107M1095 721.5H1107" stroke="#6e6e6e" stroke-width="1"/><rect x="1118.5" y="708.5" width="15" height="15" fill="#fbfbfb" stroke="#7a7a7a" stroke-width="1"/><path d="M1121 711.5H1131M1121 720.5H1131" stroke="#9a9a9a" stroke-width="1"/></svg>
<!-- zoom -->
<svg style="left:1145px;top:706px" width="142" height="20" viewBox="1145 706 142 20"><path d="M1147 715.5H1154" stroke="#6e6e6e" stroke-width="1"/><path d="M1161 715H1270.5" stroke="#d2d2d2" stroke-width="1.2"/><path d="M1215 708V723" stroke="#d0d0d0" stroke-width="1"/><circle cx="1215" cy="715.2" r="4.8" fill="#fff" stroke="#8a8a8a" stroke-width="1"/><path d="M1276.6 715.5H1283.6M1280.1 712V719" stroke="#6e6e6e" stroke-width="1"/></svg>
<span class="t" style="left:1299.70px;top:710.00px;font-size:13.33px;letter-spacing:-0.879px;">100%</span>
<span class="t" style="left:1338.60px;top:704.00px;font-size:14px;color:#777;">»</span>
<div id="stsh"></div>
</div>
<div class="sec" id="taskbar">
<div id="tkbg"></div>
<div class="tkh" style="left:111px;width:37px"></div>
<div class="tkh" style="left:228px;width:37px"></div>
<div class="tkh" style="left:969px;width:37px;background:#2d6963;border-color:#2fc3a1"></div>
<svg style="left:0;top:730px" width="1366" height="38" viewBox="0 730 1366 38">
<defs>
<linearGradient id="gfx" x1="0" y1="0" x2="0" y2="1"><stop offset="0" stop-color="#ffd43a"/><stop offset=".45" stop-color="#ff8a16"/><stop offset="1" stop-color="#e3206a"/></linearGradient>
<linearGradient id="gop" x1="0" y1="0" x2="0" y2="1"><stop offset="0" stop-color="#ff2236"/><stop offset="1" stop-color="#b00a1c"/></linearGradient>
<linearGradient id="gfo" x1="0" y1="0" x2="0" y2="1"><stop offset="0" stop-color="#3f9be8"/><stop offset="1" stop-color="#2a7fd6"/></linearGradient>
<linearGradient id="gst" x1="0" y1="0" x2="0" y2="1"><stop offset="0" stop-color="#2f8fdc"/><stop offset="1" stop-color="#0d4c97"/></linearGradient>
<linearGradient id="gtb" x1="0" y1="0" x2="1" y2="1"><stop offset="0" stop-color="#2f8fe8"/><stop offset="1" stop-color="#0b3f8f"/></linearGradient>
<linearGradient id="gtr" x1="0" y1="0" x2="0" y2="1"><stop offset="0" stop-color="#4aaff0"/><stop offset="1" stop-color="#6cc2f5"/></linearGradient>
<linearGradient id="gdk" x1="0" y1="1" x2="1" y2="0"><stop offset="0" stop-color="#2c7fbf"/><stop offset="1" stop-color="#1fc79a"/></linearGradient>
<linearGradient id="gdp" x1="0" y1="1" x2="1" y2="0"><stop offset="0" stop-color="#e0455e"/><stop offset="1" stop-color="#9a3fa8"/></linearGradient>
</defs>
<!-- manjaro -->
<path d="M9 739H22V745H15V759H9ZM16 746H22V759H16ZM23 739H29V759H23Z" fill="#fff"/>
<!-- pager -->
<rect x="39.5" y="733.5" width="25" height="14.5" fill="#7ab4a9" stroke="#3ed3ae"/><rect x="39.5" y="749" width="25" height="14.5" fill="#2b3039" stroke="#3c424d"/>
<!-- folder -->
<path d="M81 741.2C81 740.4 81.6 739.8 82.4 739.8H88.6L90.6 741.8H99.6C100.4 741.8 101 742.4 101 743.2V746H81Z" fill="#2a6db3"/><rect x="82.4" y="743.6" width="17" height="4" fill="#fff"/><path d="M81 745.6H101V756.6C101 757.4 100.4 758 99.6 758H82.4C81.6 758 81 757.4 81 756.6Z" fill="url(#gfo)"/>
<!-- firefox -->
<circle cx="130" cy="749.4" r="10" fill="url(#gfx)"/><path d="M133.4 738.6C137.6 740.4 140.6 745 140 750C139.4 746 137 744.4 134.6 743.4Z" fill="#ffe14a"/><circle cx="130.6" cy="749" r="5.2" fill="#2340c8"/><path d="M124 744C126 743 128.4 744 129 746C127 746 126 748 127.4 750.4C129 753 133 752.4 134.4 750.6C134 755 128 757 124 753.6C121.4 751 121.6 746.6 124 744Z" fill="#ff7a1c"/>
<!-- opera -->
<ellipse cx="169" cy="749" rx="10.2" ry="10.2" fill="url(#gop)"/><ellipse cx="169" cy="749" rx="4.6" ry="7.6" fill="#383f4b"/>
<!-- vivaldi -->
<rect x="198" y="739" width="20.2" height="19.8" rx="4.4" fill="#ef3939"/><path d="M202.6 744.4C203.8 743 205.8 743.6 206.4 745.2L208.2 749.4L210.4 744.6C211.2 743 213.4 743.4 213.8 744.8C214 745.6 213.8 746.2 213.4 747L209.8 753.4C209 754.8 207.2 754.8 206.4 753.4L202.6 746.8C202.2 746 202.2 745 202.6 744.4Z" fill="#fff"/>
<!-- thunderbird -->
<circle cx="247" cy="749" r="10.6" fill="url(#gtb)"/><path d="M238 748.6C239 744 243 740.6 247.6 740.2C252 740.6 255.6 743 257 747C254 744.6 250 744 247 746.6L241 751.4Z" fill="#5fb0f5" opacity=".75"/><path d="M239.4 749.2L251.6 744.8L253.8 753L242.6 757.2Z" fill="#f4f4f6"/><path d="M239.4 749.2L247.6 751.4L251.6 744.8" fill="none" stroke="#c6c9d2" stroke-width=".8"/>
<!-- orange -->
<circle cx="286" cy="749" r="9.6" fill="#f8a21c"/><circle cx="286" cy="749" r="8.2" fill="none" stroke="#ffe0a0" stroke-width="1"/><path d="M286 741.4V756.6M278.4 749H293.6M280.6 743.6L291.4 754.4M291.4 743.6L280.6 754.4" stroke="#ffd488" stroke-width=".9"/><circle cx="286" cy="749" r="1.4" fill="#ffe6b0"/>
<!-- vlc -->
<rect x="315.2" y="740.4" width="19.6" height="17.4" fill="#1d1d1d"/><path d="M325 742.4L329.4 753.6H320.6Z" fill="#ff8c00"/><path d="M323.2 746.6H326.8L327.8 749.2H322.2Z" fill="#f2f2f2"/><path d="M319.4 753.4H330.6L331.4 756H318.6Z" fill="#ff8c00"/>
<!-- spotify -->
<circle cx="364" cy="749" r="10" fill="#1ed760"/><path d="M358 745.4C362 744.2 367 744.6 370.4 746.6M358.6 748.8C362 747.8 366.2 748.2 369.2 750M359.4 752C362 751.2 365.4 751.6 367.8 753" fill="none" stroke="#15181c" stroke-width="1.6" stroke-linecap="round"/>
<!-- blue doc -->
<path d="M396 740H407L410.6 743.6V758H396Z" fill="#1ea7f2"/><path d="M407 740V743.6H410.6Z" fill="#0e78bf"/><path d="M399 747.5H407.6M399 750H407.6M399 752.5H405" stroke="#8fd4fa" stroke-width=".8"/>
<!-- textmaker -->
<rect x="431" y="738" width="22" height="22" fill="#c40000"/><path d="M432.6 739.6H451.4V758.4H436M432.6 739.6V755" fill="none" stroke="#fff" stroke-opacity=".8" stroke-width=".8"/><rect x="432.4" y="755.4" width="2.6" height="2.6" fill="#fff"/><path d="M437 743H446V745.4H442.8V754H440.2V745.4H437Z" fill="#fff"/><path d="M439.5 738L447.5 738L453 743.5V751.5Z" fill="#4f74f0"/><text x="444.2" y="742.6" font-family="Liberation Sans,sans-serif" font-size="3.6" font-weight="700" fill="#fff" transform="rotate(45 444.2 742.6)">FREE</text>
<!-- green sheet -->
<path d="M474 740H485L488.6 743.6V758H474Z" fill="#2eb673"/><path d="M485 740V743.6H488.6Z" fill="#1a8650"/><path d="M477 746.6H485.6V754H477ZM477 750.2H485.6M481.3 746.6V754" fill="none" stroke="#8fe0b8" stroke-width=".8"/>
<!-- planmaker -->
<rect x="509" y="738" width="22" height="22" fill="#4c9a3e"/><path d="M510.6 739.6H529.4V758.4H514M510.6 739.6V755" fill="none" stroke="#fff" stroke-opacity=".8" stroke-width=".8"/><rect x="510.4" y="755.4" width="2.6" height="2.6" fill="#fff"/><path d="M516.4 743V754H518.8V750.4H520.8C523.4 750.4 525 749 525 746.6C525 744.4 523.4 743 520.8 743ZM518.8 745H520.4C521.8 745 522.6 745.6 522.6 746.7C522.6 747.8 521.8 748.4 520.4 748.4H518.8Z" fill="#fff" fill-rule="evenodd"/><path d="M517.5 738L525.5 738L531 743.5V751.5Z" fill="#4f74f0"/><text x="522.2" y="742.6" font-family="Liberation Sans,sans-serif" font-size="3.6" font-weight="700" fill="#fff" transform="rotate(45 522.2 742.6)">FREE</text>
<!-- orange pres doc -->
<path d="M552 740H563L566.6 743.6V758H552Z" fill="#f0703a"/><path d="M563 740V743.6H566.6Z" fill="#b84a1c"/><path d="M555 746.6H563.6V752.6H555Z" fill="none" stroke="#fbb89c" stroke-width=".8"/><path d="M558.4 748.2L560.8 749.6L558.4 751Z" fill="#fbb89c"/>
<!-- presentations -->
<rect x="587.5" y="738" width="22" height="22" fill="#da8426"/><path d="M589.1 739.6H607.9V758.4H592.5M589.1 739.6V755" fill="none" stroke="#fff" stroke-opacity=".8" stroke-width=".8"/><rect x="588.9" y="755.4" width="2.6" height="2.6" fill="#fff"/><path d="M596.0 738L604.0 738L609.5 743.5V751.5Z" fill="#4f74f0"/><text x="600.7" y="742.6" font-family="Liberation Sans,sans-serif" font-size="3.6" font-weight="700" fill="#fff" transform="rotate(45 600.7 742.6)">FREE</text>
<!-- pink ring -->
<ellipse cx="637" cy="749" rx="10" ry="8.4" fill="#e0529a"/><circle cx="636.2" cy="749.2" r="5.2" fill="#e6e2e6"/><path d="M633 748.6C634 746.6 637 746 639 747.4" stroke="#fff" stroke-width="1.2" fill="none"/>
<!-- keepassxc -->
<circle cx="675.6" cy="749" r="10" fill="#4d8f2c" stroke="#e8efe4" stroke-width="1.4"/><circle cx="675.6" cy="744.4" r="2.6" fill="none" stroke="#fff" stroke-width="1.6"/><path d="M675.6 747V756.4M675.6 752H678M675.6 754.6H677.6" stroke="#fff" stroke-width="1.8"/>
<!-- telegram -->
<circle cx="715" cy="749" r="10" fill="#2ca4e0"/><path d="M708.6 749L721.6 743.6L719.4 755.2L715.6 752.4L713.6 754.4L713.2 751Z" fill="#fff"/><path d="M713.2 751L719.6 745.4L715.6 752.4" fill="#c8daea"/>
<!-- skype -->
<circle cx="750.4" cy="745.6" r="5.6" fill="#00aff0"/><circle cx="757" cy="752.6" r="5.6" fill="#00aff0"/><circle cx="753.6" cy="749" r="8.6" fill="#00aff0"/>
<!-- discord -->
<path d="M786.4 740H800.2C801.6 740 802.6 741 802.6 742.4V757.8L799.4 755H786.4C785 755 784 754 784 752.6V742.4C784 741 785 740 786.4 740Z" fill="#7289da"/><path d="M788 750.6C788 746.6 789.6 744.4 789.6 744.4C791 743.4 792.4 743.4 792.4 743.4L792.6 743.8C794 743.6 794.6 743.8 794.6 743.8L794.8 743.4C794.8 743.4 796.2 743.4 797.6 744.4C797.6 744.4 799.2 746.6 799.2 750.6C799.2 750.6 798.2 752.2 795.8 752.2L795.2 751.4H792L791.4 752.2C789 752.2 788 750.6 788 750.6Z" fill="#fff"/><ellipse cx="791.6" cy="748.6" rx="1.1" ry="1.3" fill="#7289da"/><ellipse cx="795.6" cy="748.6" rx="1.1" ry="1.3" fill="#7289da"/>
<!-- K -->
<path d="M823 738.6H828.6V747L834.4 738.6H840.4L834 747.4L840.8 759.6H834.6L830.2 751.2L828.6 753.2V759.6H823Z" fill="#8fa8d6" stroke="#eef1f7" stroke-width="1"/><path d="M823.4 753.6H828.4V759.2H823.4ZM832 753.6L835 759.2H840.2L837.2 753.6Z" fill="#7fb522"/><path d="M824.6 739V753M826.6 739V753" stroke="#e8eef8" stroke-width=".7"/>
<!-- purple blobs -->
<ellipse cx="869.4" cy="743.4" rx="3.2" ry="2.6" fill="#b7a5f4" transform="rotate(35 869.4 743.4)"/><ellipse cx="864.4" cy="750" rx="4.2" ry="2.4" fill="#c3b5ff" transform="rotate(-12 864.4 750)"/><ellipse cx="877.2" cy="749" rx="3.8" ry="3" fill="#5a34c6" transform="rotate(30 877.2 749)"/><ellipse cx="873.6" cy="754.4" rx="4" ry="2.4" fill="#6a42da" transform="rotate(-10 873.6 754.4)"/>
<!-- gba -->
<path d="M900 744.4C903 741.6 915 742.4 919.4 746.4C920.6 749 920.4 753.6 918.6 756C913 757.4 903 755.6 900 753.4C898.8 750.6 899 746.6 900 744.4Z" fill="#5b3cc4"/><path d="M904.6 746L914.2 747.6L913.8 753.4L904.4 751.6Z" fill="#23232f"/><path d="M906 748.4L912.6 749.6" stroke="#c8c8d8" stroke-width="1"/>
<!-- steam -->
<circle cx="949" cy="749" r="9.6" fill="url(#gst)"/><circle cx="952.6" cy="746.2" r="2.9" fill="none" stroke="#fff" stroke-width="1.3"/><path d="M939.8 750.4L946 753" stroke="#fff" stroke-width="2.6" stroke-linecap="round"/><circle cx="946.4" cy="753" r="2.4" fill="#fff"/><path d="M948 751.8L951 748.6" stroke="#fff" stroke-width="1.6"/>
<!-- active textmaker -->
<rect x="977" y="738.2" width="22" height="22" fill="#c40000"/><path d="M978.6 739.8H997.4V758.6H982M978.6 739.8V755.2" fill="none" stroke="#fff" stroke-opacity=".8" stroke-width=".8"/><rect x="978.4" y="755.6" width="2.6" height="2.6" fill="#fff"/><path d="M983 743.2H992V745.6H988.8V754.2H986.2V745.6H983Z" fill="#fff"/><path d="M985.5 738.2L993.5 738.2L999 743.7V751.7Z" fill="#4f74f0"/><text x="990.2" y="742.8000000000001" font-family="Liberation Sans,sans-serif" font-size="3.6" font-weight="700" fill="#fff" transform="rotate(45 990.2 742.8000000000001)">FREE</text>
<!-- desktop widget -->
<path d="M1019 735H1051L1019 759Z" fill="url(#gdk)"/><path d="M1051 735V759H1019Z" fill="url(#gdp)"/><path d="M1019 759L1031 750L1043 759Z" fill="#4a5a62"/><rect x="1019" y="759" width="32" height="3.8" fill="#e2dae2"/><rect x="1021" y="760" width="2" height="1.6" fill="#555"/><rect x="1047.4" y="760" width="2" height="1.6" fill="#555"/>
<!-- trash folder -->
<path d="M1056.2 737.4C1056.2 736.6 1056.8 736 1057.6 736H1068L1070 738.4H1084.8C1085.6 738.4 1086.2 739 1086.2 739.8V744H1056.2Z" fill="#1b7fc4"/><path d="M1056.2 742.4C1060 741.6 1064 741.6 1066 740.6H1086.2V760.4C1086.2 761.2 1085.6 761.8 1084.8 761.8H1057.6C1056.8 761.8 1056.2 761.2 1056.2 760.4Z" fill="url(#gtr)"/><path d="M1067 747.6H1075.4M1069.4 747.6V746.4H1073V747.6M1068 748V754.4C1068 755 1068.4 755.4 1069 755.4H1073.4C1074 755.4 1074.4 755 1074.4 754.4V748M1070.2 749.6V753.4M1072.2 749.6V753.4" fill="none" stroke="#1b7fc4" stroke-width="1"/>
<!-- tray -->
<g fill="none" stroke="#f0f0f0" stroke-width="1.3">
<rect x="1100.2" y="741.4" width="11.8" height="15.2" rx=".8"/><path d="M1100.2 753.6H1112M1102.4 746.6L1106.2 742.8" stroke-width="1"/>
<rect x="1153.4" y="748" width="9.8" height="8.6" rx=".6"/><path d="M1155 748V741.6H1161.6V748M1155.8 752.6H1160.8" /><path d="M1157 743.6V746M1159.6 743.6V746" stroke-width="1"/>
<path d="M1174.1 745.3A14 14 0 0 1 1193.9 745.3M1177.3 748.5A9.5 9.5 0 0 1 1190.7 748.5M1180.5 751.7A5 5 0 0 1 1187.5 751.7" stroke-width="1.2"/><circle cx="1184" cy="755.6" r="1.9"/>
<path d="M1207.6 741.6H1216.4V752.4H1213.4M1203.6 745.4H1209.6L1212.6 748.4V756H1203.6Z"/>
<path d="M1257.2 752L1262.2 746.8L1267.2 752" stroke-width="1.5"/>
</g>
<path d="M1132.2 740.4L1137.2 743.6L1132.2 746.8L1127.2 743.6ZM1122.2 743.6L1127.2 740.4L1132.2 743.6L1127.2 746.8ZM1122.2 750L1127.2 746.8L1132.2 750L1127.2 753.2ZM1132.2 750L1137.2 746.8L1142.2 750L1137.2 753.2ZM1127.2 754.4L1132.2 751.2L1137.2 754.4L1132.2 757.6Z" fill="#f4f4f4" transform="translate(-0.2 0)"/>
<path d="M1132.2 740.4L1137.2 743.6L1142.2 740.4L1137.2 737.2Z" fill="#f4f4f4" transform="translate(0 3.2)" opacity="0"/>
<path d="M1228.4 746.4H1231.6L1236.4 741.6V756L1231.6 751.2H1228.4Z" fill="#f0f0f0"/><path d="M1238.4 745.4C1240 747.4 1240 750.2 1238.4 752.2M1240.6 743.4C1243 746.4 1243 751.2 1240.6 754.2M1242.8 741.6C1246 745.6 1246 752 1242.8 756" fill="none" stroke="#f0f0f0" stroke-width="1"/>
<path d="M1342 745.4H1354.4M1342 752.2H1354.4" stroke="#8e939c" stroke-width="1"/><circle cx="1349.8" cy="745.4" r="1.9" fill="#8e939c"/><circle cx="1345.4" cy="752.2" r="1.6" fill="#30353f" stroke="#8e939c" stroke-width="1"/>
</svg>
<span class="t" style="left:749.00px;top:741.00px;font-size:15px;font-weight:700;color:#fff;">S</span>
<span class="t" style="left:594.60px;top:743.00px;font-size:13px;font-weight:700;color:#fff;">S</span>
<span class="t" style="left:1282.60px;top:734.00px;font-size:18.2px;letter-spacing:-0.200px;color:#f4f4f4;">17:39</span>
<span class="t" style="left:1277.00px;top:752.00px;font-size:13.9px;letter-spacing:0.108px;color:#f4f4f4;">13.04.19</span>
</div>
</body>
</html>
